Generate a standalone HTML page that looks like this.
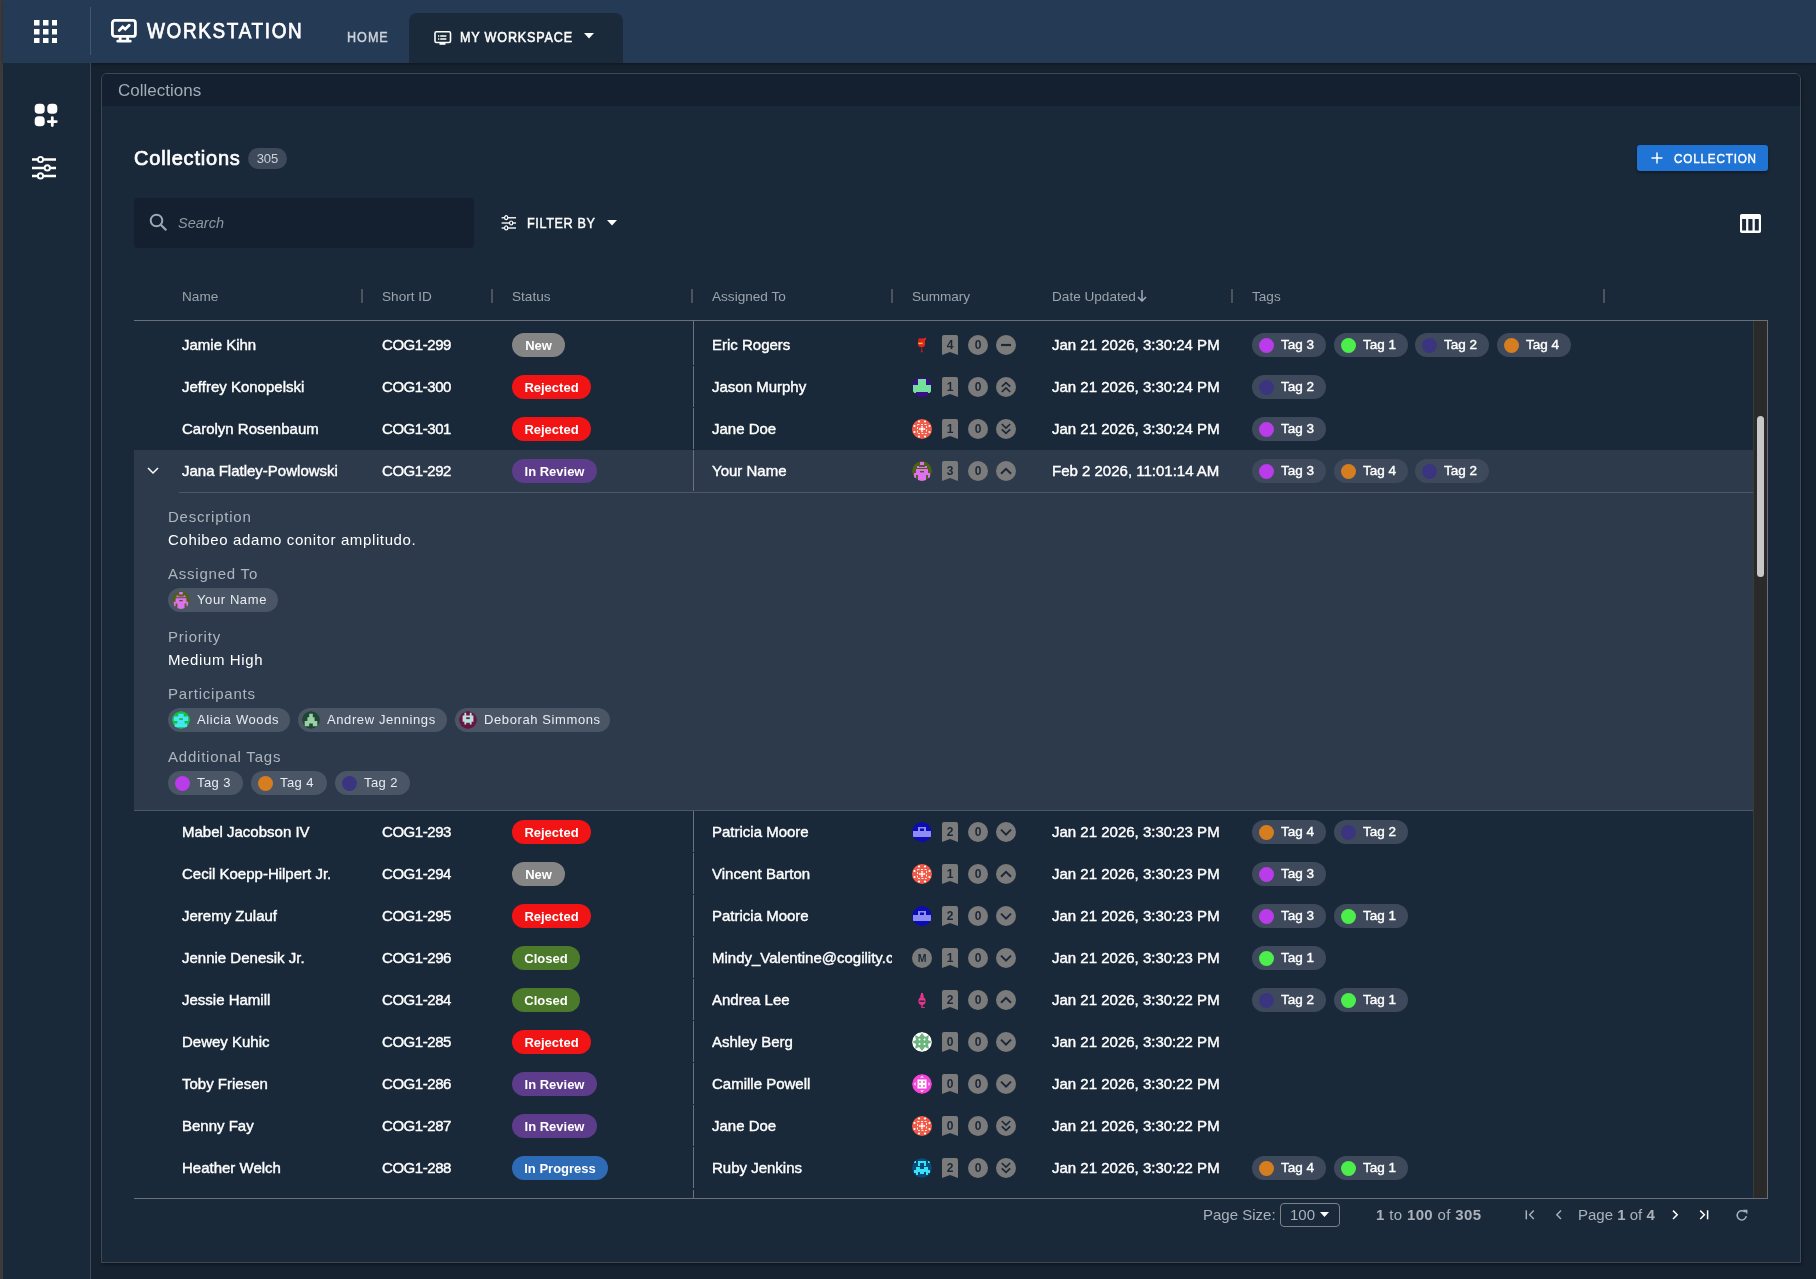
<!DOCTYPE html><html><head><meta charset="utf-8"><style>

*{box-sizing:border-box;margin:0;padding:0}
svg{display:block}
html,body{width:1816px;height:1279px;overflow:hidden;background:#172230;font-family:"Liberation Sans",sans-serif;color:#fff}
.abs{position:absolute}
#root{position:absolute;left:0;top:0;width:1816px;height:1279px;overflow:hidden;background:#172230;will-change:transform}
#strip{position:absolute;left:0;top:0;width:3px;height:1279px;background:#3b3b3b}
#hdr{position:absolute;left:3px;top:0;width:1813px;height:63px;background:#253a55;box-shadow:0 1px 3px rgba(0,0,0,.35)}
#side{position:absolute;left:3px;top:63px;width:88px;height:1216px;background:#1a2939;border-right:1px solid #3b4a5b}
#panel{position:absolute;left:101px;top:73px;width:1700px;height:1190px;background:#1a2939;border:1px solid #3f4955;border-radius:6px 6px 0 0;overflow:hidden;box-shadow:1px 2px 3px rgba(0,0,0,.35)}
#phead{position:absolute;left:0;top:0;width:100%;height:32px;background:#142030}
.row{position:absolute;left:134px;width:1619px;height:42px}
.row .c{position:absolute;top:0;height:42px;line-height:42px;white-space:nowrap;font-size:15px;-webkit-text-stroke:0.4px #fff}
.nm{left:48px} .sid{left:248px;letter-spacing:-0.45px} .stc{left:378px} .asg{left:578px;width:180px;overflow:hidden}
.sum{left:778px} .dt{left:918px} .tg{left:1118px}
.vsep{position:absolute;left:559px;top:0px;width:1px;height:41px;background:#6d737a}
.st{position:absolute;left:0;top:9px;height:24px;line-height:25px;border-radius:12px;text-align:center;font-size:13px;font-weight:bold;-webkit-text-stroke:0}
.sum span, .sum .bm{position:absolute;top:11px}
.av{left:0} .bm{left:30px;width:16px;height:20px} .zero{left:56px;width:20px;height:20px;border-radius:10px;background:#7b7b7b;color:#1b2839;font-size:12px;font-weight:bold;line-height:20px;text-align:center;-webkit-text-stroke:0}
.pr{left:84px}
.bm span{position:absolute;left:0;top:1px;width:16px;text-align:center;line-height:18px;font-size:12px;font-weight:bold;color:#1b2839;-webkit-text-stroke:0}
.bm svg{position:absolute;left:0;top:0}
.tag{position:absolute;top:9px;width:74px;height:24px;line-height:24px;border-radius:12px;background:#3e4a5b;padding:0 0 0 29px;font-size:13.5px}
.tag i{position:absolute;left:6.5px;top:4.5px;width:15px;height:15px;border-radius:8px}
.chev{position:absolute;left:12.5px;top:17px}

</style></head><body><div id="root">
<div id="strip"></div>
<div id="hdr"></div>
<div class="abs" style="left:90px;top:7px;width:1px;height:48px;background:#46586d"></div>
<svg class="abs" style="left:34px;top:20px" width="23" height="23" viewBox="0 0 23 23" fill="#fff"><rect x="0" y="0" width="5.5" height="5.5"/><rect x="9" y="0" width="5.5" height="5.5"/><rect x="18" y="0" width="5.5" height="5.5"/><rect x="0" y="9" width="5.5" height="5.5"/><rect x="9" y="9" width="5.5" height="5.5"/><rect x="18" y="9" width="5.5" height="5.5"/><rect x="0" y="18" width="5.5" height="5.5"/><rect x="9" y="18" width="5.5" height="5.5"/><rect x="18" y="18" width="5.5" height="5.5"/></svg>
<svg class="abs" style="left:111px;top:19px" width="26" height="24" viewBox="0 0 26 24"><rect x="1.4" y="1.4" width="23" height="16" rx="2.5" fill="none" stroke="#fff" stroke-width="2.8"/><rect x="7.8" y="17" width="2.8" height="4.5" fill="#fff"/><rect x="15.2" y="17" width="2.8" height="4.5" fill="#fff"/><rect x="5.4" y="20.7" width="15.2" height="2.7" rx="1.2" fill="#fff"/><path d="M8.2 11.5l3.5-3.5 2.5 2.2 4-4" stroke="#fff" stroke-width="2.8" fill="none" stroke-linecap="round"/></svg>
<div class="abs" style="left:147px;top:17px;font-size:21.5px;line-height:28px;letter-spacing:1.9px;-webkit-text-stroke:0.75px #fff;transform:scaleX(0.88);transform-origin:0 0">WORKSTATION</div>
<div class="abs" style="left:347px;top:29px;font-size:14px;line-height:16px;letter-spacing:1.1px;color:#cdd3da;-webkit-text-stroke:0.45px #cdd3da;transform:scaleX(0.9);transform-origin:0 0">HOME</div>
<div class="abs" style="left:409px;top:13px;width:214px;height:50px;background:#1a2a3a;border-radius:8px 8px 0 0"></div>
<svg class="abs" style="left:434px;top:31px" width="18" height="14" viewBox="0 0 18 14"><rect x="1" y="0.8" width="15.5" height="10.7" rx="1.5" fill="none" stroke="#fff" stroke-width="1.6"/><rect x="5.5" y="11.5" width="6" height="2.3" fill="#fff"/><path d="M4 5h1.3M6.2 5h6.2M4 8h1.3M6.2 8h6.2" stroke="#fff" stroke-width="1.4"/></svg>
<div class="abs" style="left:460px;top:29px;font-size:14px;line-height:16px;letter-spacing:0.9px;-webkit-text-stroke:0.5px #fff;transform:scaleX(0.9);transform-origin:0 0">MY WORKSPACE</div>
<svg class="abs" style="left:584px;top:33px" width="10" height="6" viewBox="0 0 10 6"><path d="M0 0h10L5 5.5z" fill="#fff"/></svg>
<div id="side"></div>
<svg class="abs" style="left:34px;top:103px" width="24" height="24" viewBox="0 0 24 24" fill="#fff"><rect x="0.7" y="0.7" width="10" height="10" rx="3.8"/><rect x="13.3" y="0.7" width="10" height="10" rx="3.8"/><rect x="0.7" y="13.3" width="10" height="10" rx="3.8"/><path d="M18.3 14.6v8M14.3 18.6h8" stroke="#fff" stroke-width="2.8" stroke-linecap="round"/></svg>
<svg class="abs" style="left:31px;top:155px" width="26" height="25" viewBox="0 0 26 25"><path d="M1 4.5h24M1 12.9h24M1 20.9h24" stroke="#fff" stroke-width="2.5"/><circle cx="9.5" cy="4.5" r="2.6" fill="#1a2838" stroke="#fff" stroke-width="1.9"/><circle cx="16.3" cy="12.9" r="2.6" fill="#1a2838" stroke="#fff" stroke-width="1.9"/><circle cx="9.5" cy="20.9" r="2.6" fill="#1a2838" stroke="#fff" stroke-width="1.9"/></svg>
<div id="panel"><div id="phead"></div></div>
<div class="abs" style="left:118px;top:81px;font-size:17px;line-height:20px;color:#a3abb5">Collections</div>
<div class="abs" style="left:134px;top:146px;font-size:20px;line-height:24px;-webkit-text-stroke:0.7px #fff;letter-spacing:0.8px">Collections</div>
<div class="abs" style="left:248px;top:148px;width:39px;height:21px;border-radius:11px;background:#3e4a5b;color:#c9d0d8;font-size:13px;line-height:21px;text-align:center">305</div>
<div class="abs" style="left:134px;top:198px;width:340px;height:50px;border-radius:4px;background:#142030"></div>
<svg class="abs" style="left:149px;top:213px" width="19" height="19" viewBox="0 0 19 19"><circle cx="7.5" cy="7.5" r="5.8" fill="none" stroke="#a0a7b0" stroke-width="2"/><path d="M11.8 11.8l5.5 5.5" stroke="#a0a7b0" stroke-width="2.2"/></svg>
<div class="abs" style="left:178px;top:215px;font-size:14.5px;line-height:17px;font-style:italic;color:#8f97a1">Search</div>
<svg class="abs" style="left:501px;top:215px" width="16" height="16" viewBox="0 0 16 16"><path d="M0.6 2.7h14.4M0.6 8h14.4M0.6 12.9h14.4" stroke="#e6e9ed" stroke-width="1.5"/><ellipse cx="5.2" cy="2.7" rx="1.6" ry="2" fill="#1b2839" stroke="#fff" stroke-width="1.2"/><ellipse cx="10.2" cy="8" rx="1.6" ry="2" fill="#1b2839" stroke="#fff" stroke-width="1.2"/><ellipse cx="5.2" cy="12.9" rx="1.6" ry="2" fill="#1b2839" stroke="#fff" stroke-width="1.2"/></svg>
<div class="abs" style="left:527px;top:215px;font-size:14px;line-height:16px;letter-spacing:0.72px;-webkit-text-stroke:0.45px #fff;transform:scaleX(0.9);transform-origin:0 0">FILTER BY</div>
<svg class="abs" style="left:607px;top:220px" width="10" height="6" viewBox="0 0 10 6"><path d="M0 0h10L5 5.5z" fill="#fff"/></svg>
<div class="abs" style="left:1637px;top:145px;width:131px;height:26px;border-radius:3px;background:#1f74d5;box-shadow:0 2px 3px rgba(0,0,0,.35)"></div>
<svg class="abs" style="left:1651px;top:152px" width="12" height="12" viewBox="0 0 12 12"><path d="M6 0.5v11M0.5 6h11" stroke="#fff" stroke-width="1.5"/></svg>
<div class="abs" style="left:1674px;top:151px;font-size:13px;line-height:15px;letter-spacing:0.9px;-webkit-text-stroke:0.4px #fff;transform:scaleX(0.9);transform-origin:0 0">COLLECTION</div>
<svg class="abs" style="left:1740px;top:214px" width="21" height="19" viewBox="0 0 21 19"><path fill-rule="evenodd" fill="#fff" d="M1.8 0h17.4a1.8 1.8 0 0 1 1.8 1.8v15.4a1.8 1.8 0 0 1-1.8 1.8H1.8A1.8 1.8 0 0 1 0 17.2V1.8A1.8 1.8 0 0 1 1.8 0zM2.1 5v11.6h4V5zM8.3 5v11.6h4.2V5zM14.8 5v11.6h4V5z"/></svg>
<div class="abs" style="left:182px;top:288.5px;font-size:13.6px;line-height:16px;color:#9ba3ad">Name</div>
<div class="abs" style="left:382px;top:288.5px;font-size:13.6px;line-height:16px;color:#9ba3ad">Short ID</div>
<div class="abs" style="left:512px;top:288.5px;font-size:13.6px;line-height:16px;color:#9ba3ad">Status</div>
<div class="abs" style="left:712px;top:288.5px;font-size:13.6px;line-height:16px;color:#9ba3ad">Assigned To</div>
<div class="abs" style="left:912px;top:288.5px;font-size:13.6px;line-height:16px;color:#9ba3ad">Summary</div>
<div class="abs" style="left:1052px;top:288.5px;font-size:13.6px;line-height:16px;color:#9ba3ad">Date Updated</div>
<div class="abs" style="left:1252px;top:288.5px;font-size:13.6px;line-height:16px;color:#9ba3ad">Tags</div>
<svg class="abs" style="left:1137px;top:290px" width="10" height="12" viewBox="0 0 10 12"><path d="M5 0v11M1 7l4 4 4-4" stroke="#a3abb5" stroke-width="1.5" fill="none"/></svg>
<div class="abs" style="left:361px;top:289px;width:2px;height:14px;background:#4c535b"></div>
<div class="abs" style="left:491px;top:289px;width:2px;height:14px;background:#4c535b"></div>
<div class="abs" style="left:691px;top:289px;width:2px;height:14px;background:#4c535b"></div>
<div class="abs" style="left:891px;top:289px;width:2px;height:14px;background:#4c535b"></div>
<div class="abs" style="left:1231px;top:289px;width:2px;height:14px;background:#4c535b"></div>
<div class="abs" style="left:1603px;top:289px;width:2px;height:14px;background:#4c535b"></div>
<div class="abs" style="left:134px;top:320px;width:1634px;height:1px;background:#6a7079"></div>
<div class="abs" style="left:693px;top:321px;width:1px;height:3px;background:#6d737a"></div>
<div class="abs" style="left:693px;top:1190px;width:1px;height:8px;background:#6d737a"></div>
<div class="row" style="top:324px;"><div class="c nm">Jamie Kihn</div><div class="c sid">COG1-299</div><div class="c stc"><span class="st" style="background:#858585;width:53px">New</span></div><div class="vsep"></div><div class="c asg">Eric Rogers</div><div class="c sum"><span class="av"><svg width="20" height="20" viewBox="0 0 20 20"><defs><clipPath id="cc"><circle cx="10" cy="10" r="10"/></clipPath></defs><g clip-path="url(#cc)"><path d="M6.5 3.5h5l2.5-1v2l-1 1v5l-1.5 1.5h-4L6 10z" fill="#e52222"/><rect x="6.3" y="7.6" width="4.2" height="1.5" fill="#f2c21a"/><rect x="7.3" y="5.5" width="1.2" height="1.2" fill="#901010"/><rect x="9.3" y="12" width="1" height="4.5" fill="#b02020"/><circle cx="9.8" cy="16.6" r="1" fill="#c02020"/></g></svg></span><div class="bm"><svg width="16" height="20" viewBox="0 0 16 20"><path d="M2 0h12a2 2 0 0 1 2 2v18l-8-3-8 3V2a2 2 0 0 1 2-2z" fill="#7b7b7b"/></svg><span>4</span></div><span class="zero">0</span><span class="pr"><svg width="20" height="20" viewBox="0 0 20 20"><circle cx="10" cy="10" r="10" fill="#7b7b7b"/><path d="M5 10h10" stroke="#1b2839" stroke-width="2.2"/></svg></span></div><div class="c dt">Jan 21 2026, 3:30:24 PM</div><div class="c tg"><div class="tag" style="left:0px"><i style="background:#b93be9"></i>Tag 3</div><div class="tag" style="left:82px"><i style="background:#4cee4c"></i>Tag 1</div><div class="tag" style="left:163px"><i style="background:#3b3580"></i>Tag 2</div><div class="tag" style="left:245px"><i style="background:#d67d1f"></i>Tag 4</div></div></div>
<div class="row" style="top:366px;"><div class="c nm">Jeffrey Konopelski</div><div class="c sid">COG1-300</div><div class="c stc"><span class="st" style="background:#f21414;width:79px">Rejected</span></div><div class="vsep"></div><div class="c asg">Jason Murphy</div><div class="c sum"><span class="av"><svg width="20" height="20" viewBox="0 0 20 20"><defs><clipPath id="cc"><circle cx="10" cy="10" r="10"/></clipPath></defs><g clip-path="url(#cc)"><circle cx="10" cy="10" r="10" fill="#3a0e88"/><path d="M6 2h8v6h5v8H1V8h5z" fill="#74e09c"/><rect x="4" y="15" width="12" height="6" fill="#3a0e88"/></g></svg></span><div class="bm"><svg width="16" height="20" viewBox="0 0 16 20"><path d="M2 0h12a2 2 0 0 1 2 2v18l-8-3-8 3V2a2 2 0 0 1 2-2z" fill="#7b7b7b"/></svg><span>1</span></div><span class="zero">0</span><span class="pr"><svg width="20" height="20" viewBox="0 0 20 20"><circle cx="10" cy="10" r="10" fill="#7b7b7b"/><path d="M5.8 9.6l4.2-4 4.2 4M5.8 15l4.2-4 4.2 4" stroke="#1b2839" stroke-width="1.7" fill="none"/></svg></span></div><div class="c dt">Jan 21 2026, 3:30:24 PM</div><div class="c tg"><div class="tag" style="left:0px"><i style="background:#3b3580"></i>Tag 2</div></div></div>
<div class="row" style="top:408px;"><div class="c nm">Carolyn Rosenbaum</div><div class="c sid">COG1-301</div><div class="c stc"><span class="st" style="background:#f21414;width:79px">Rejected</span></div><div class="vsep"></div><div class="c asg">Jane Doe</div><div class="c sum"><span class="av"><svg width="20" height="20" viewBox="0 0 20 20"><circle cx="10" cy="10" r="10" fill="#f25a48"/><circle cx="7" cy="2.5" r="1.1" fill="#ffffff"/><circle cx="13" cy="2.5" r="1.1" fill="#ffffff"/><circle cx="2.5" cy="7" r="1.1" fill="#ffffff"/><circle cx="17.5" cy="7" r="1.1" fill="#ffffff"/><circle cx="2.5" cy="13" r="1.1" fill="#ffffff"/><circle cx="17.5" cy="13" r="1.1" fill="#ffffff"/><circle cx="7" cy="17.5" r="1.1" fill="#ffffff"/><circle cx="13" cy="17.5" r="1.1" fill="#ffffff"/><path d="M5.5 5.5h9v9h-9z" fill="none" stroke="#ffffff" stroke-width="0.9" stroke-dasharray="2 1.5"/><circle cx="10" cy="10" r="1.8" fill="#ffffff"/><path d="M10 6.5l1.2 1.5h-2.4zM10 13.5l1.2-1.5h-2.4zM6.5 10l1.5 1.2v-2.4zM13.5 10l-1.5 1.2v-2.4z" fill="#ffffff"/></svg></span><div class="bm"><svg width="16" height="20" viewBox="0 0 16 20"><path d="M2 0h12a2 2 0 0 1 2 2v18l-8-3-8 3V2a2 2 0 0 1 2-2z" fill="#7b7b7b"/></svg><span>1</span></div><span class="zero">0</span><span class="pr"><svg width="20" height="20" viewBox="0 0 20 20"><circle cx="10" cy="10" r="10" fill="#7b7b7b"/><path d="M5.8 5l4.2 4 4.2-4M5.8 10.4l4.2 4 4.2-4" stroke="#1b2839" stroke-width="1.7" fill="none"/></svg></span></div><div class="c dt">Jan 21 2026, 3:30:24 PM</div><div class="c tg"><div class="tag" style="left:0px"><i style="background:#b93be9"></i>Tag 3</div></div></div>
<div class="row" style="top:450px;background:#2c3a4c;"><svg class="chev" width="12" height="8" viewBox="0 0 12 8"><path d="M1 1l5 5 5-5" stroke="#fff" stroke-width="1.5" fill="none"/></svg><div class="c nm">Jana Flatley-Powlowski</div><div class="c sid">COG1-292</div><div class="c stc"><span class="st" style="background:#5d3c8b;width:85px">In Review</span></div><div class="vsep"></div><div class="c asg">Your Name</div><div class="c sum"><span class="av"><svg width="20" height="20" viewBox="0 0 20 20"><defs><clipPath id="cc"><circle cx="10" cy="10" r="10"/></clipPath></defs><g clip-path="url(#cc)"><circle cx="10" cy="10" r="10" fill="#4e6018"/><path d="M8 1h4v3h-4zM5 5h2v1h6V5h2v2H5zM4 8h12v4h2v5h-2v-3h-2v6H6v-6H4v3H2v-5h2z" fill="#e070f2"/><rect x="8" y="10" width="4" height="1.4" fill="#4e6018"/></g></svg></span><div class="bm"><svg width="16" height="20" viewBox="0 0 16 20"><path d="M2 0h12a2 2 0 0 1 2 2v18l-8-3-8 3V2a2 2 0 0 1 2-2z" fill="#7b7b7b"/></svg><span>3</span></div><span class="zero">0</span><span class="pr"><svg width="20" height="20" viewBox="0 0 20 20"><circle cx="10" cy="10" r="10" fill="#7b7b7b"/><path d="M5 12.8l5-5 5 5" stroke="#1b2839" stroke-width="2" fill="none"/></svg></span></div><div class="c dt">Feb 2 2026, 11:01:14 AM</div><div class="c tg"><div class="tag" style="left:0px"><i style="background:#b93be9"></i>Tag 3</div><div class="tag" style="left:82px"><i style="background:#d67d1f"></i>Tag 4</div><div class="tag" style="left:163px"><i style="background:#3b3580"></i>Tag 2</div></div></div>
<div class="row" style="top:811px;"><div class="c nm">Mabel Jacobson IV</div><div class="c sid">COG1-293</div><div class="c stc"><span class="st" style="background:#f21414;width:79px">Rejected</span></div><div class="vsep"></div><div class="c asg">Patricia Moore</div><div class="c sum"><span class="av"><svg width="20" height="20" viewBox="0 0 20 20"><defs><clipPath id="cc"><circle cx="10" cy="10" r="10"/></clipPath></defs><g clip-path="url(#cc)"><circle cx="10" cy="10" r="10" fill="#0c0cb4"/><path d="M6 5h8v4h5v6H1V9h5z" fill="#8c8cf4"/><rect x="8" y="6.5" width="4" height="2.5" fill="#0c0cb4"/><rect x="1" y="15" width="18" height="5" fill="#0c0cb4"/></g></svg></span><div class="bm"><svg width="16" height="20" viewBox="0 0 16 20"><path d="M2 0h12a2 2 0 0 1 2 2v18l-8-3-8 3V2a2 2 0 0 1 2-2z" fill="#7b7b7b"/></svg><span>2</span></div><span class="zero">0</span><span class="pr"><svg width="20" height="20" viewBox="0 0 20 20"><circle cx="10" cy="10" r="10" fill="#7b7b7b"/><path d="M5 7.6l5 5 5-5" stroke="#1b2839" stroke-width="2" fill="none"/></svg></span></div><div class="c dt">Jan 21 2026, 3:30:23 PM</div><div class="c tg"><div class="tag" style="left:0px"><i style="background:#d67d1f"></i>Tag 4</div><div class="tag" style="left:82px"><i style="background:#3b3580"></i>Tag 2</div></div></div>
<div class="row" style="top:853px;"><div class="c nm">Cecil Koepp-Hilpert Jr.</div><div class="c sid">COG1-294</div><div class="c stc"><span class="st" style="background:#858585;width:53px">New</span></div><div class="vsep"></div><div class="c asg">Vincent Barton</div><div class="c sum"><span class="av"><svg width="20" height="20" viewBox="0 0 20 20"><circle cx="10" cy="10" r="10" fill="#f25a48"/><circle cx="7" cy="2.5" r="1.1" fill="#ffffff"/><circle cx="13" cy="2.5" r="1.1" fill="#ffffff"/><circle cx="2.5" cy="7" r="1.1" fill="#ffffff"/><circle cx="17.5" cy="7" r="1.1" fill="#ffffff"/><circle cx="2.5" cy="13" r="1.1" fill="#ffffff"/><circle cx="17.5" cy="13" r="1.1" fill="#ffffff"/><circle cx="7" cy="17.5" r="1.1" fill="#ffffff"/><circle cx="13" cy="17.5" r="1.1" fill="#ffffff"/><path d="M5.5 5.5h9v9h-9z" fill="none" stroke="#ffffff" stroke-width="0.9" stroke-dasharray="2 1.5"/><circle cx="10" cy="10" r="1.8" fill="#ffffff"/><path d="M10 6.5l1.2 1.5h-2.4zM10 13.5l1.2-1.5h-2.4zM6.5 10l1.5 1.2v-2.4zM13.5 10l-1.5 1.2v-2.4z" fill="#ffffff"/></svg></span><div class="bm"><svg width="16" height="20" viewBox="0 0 16 20"><path d="M2 0h12a2 2 0 0 1 2 2v18l-8-3-8 3V2a2 2 0 0 1 2-2z" fill="#7b7b7b"/></svg><span>1</span></div><span class="zero">0</span><span class="pr"><svg width="20" height="20" viewBox="0 0 20 20"><circle cx="10" cy="10" r="10" fill="#7b7b7b"/><path d="M5 12.8l5-5 5 5" stroke="#1b2839" stroke-width="2" fill="none"/></svg></span></div><div class="c dt">Jan 21 2026, 3:30:23 PM</div><div class="c tg"><div class="tag" style="left:0px"><i style="background:#b93be9"></i>Tag 3</div></div></div>
<div class="row" style="top:895px;"><div class="c nm">Jeremy Zulauf</div><div class="c sid">COG1-295</div><div class="c stc"><span class="st" style="background:#f21414;width:79px">Rejected</span></div><div class="vsep"></div><div class="c asg">Patricia Moore</div><div class="c sum"><span class="av"><svg width="20" height="20" viewBox="0 0 20 20"><defs><clipPath id="cc"><circle cx="10" cy="10" r="10"/></clipPath></defs><g clip-path="url(#cc)"><circle cx="10" cy="10" r="10" fill="#0c0cb4"/><path d="M6 5h8v4h5v6H1V9h5z" fill="#8c8cf4"/><rect x="8" y="6.5" width="4" height="2.5" fill="#0c0cb4"/><rect x="1" y="15" width="18" height="5" fill="#0c0cb4"/></g></svg></span><div class="bm"><svg width="16" height="20" viewBox="0 0 16 20"><path d="M2 0h12a2 2 0 0 1 2 2v18l-8-3-8 3V2a2 2 0 0 1 2-2z" fill="#7b7b7b"/></svg><span>2</span></div><span class="zero">0</span><span class="pr"><svg width="20" height="20" viewBox="0 0 20 20"><circle cx="10" cy="10" r="10" fill="#7b7b7b"/><path d="M5 7.6l5 5 5-5" stroke="#1b2839" stroke-width="2" fill="none"/></svg></span></div><div class="c dt">Jan 21 2026, 3:30:23 PM</div><div class="c tg"><div class="tag" style="left:0px"><i style="background:#b93be9"></i>Tag 3</div><div class="tag" style="left:82px"><i style="background:#4cee4c"></i>Tag 1</div></div></div>
<div class="row" style="top:937px;"><div class="c nm">Jennie Denesik Jr.</div><div class="c sid">COG1-296</div><div class="c stc"><span class="st" style="background:#4b7a2b;width:68px">Closed</span></div><div class="vsep"></div><div class="c asg">Mindy_Valentine@cogility.c</div><div class="c sum"><span class="av"><svg width="20" height="20" viewBox="0 0 20 20"><circle cx="10" cy="10" r="10" fill="#7b7b7b"/><text x="10" y="14" text-anchor="middle" font-family="Liberation Sans" font-weight="bold" font-size="10.5" fill="#1b2839">M</text></svg></span><div class="bm"><svg width="16" height="20" viewBox="0 0 16 20"><path d="M2 0h12a2 2 0 0 1 2 2v18l-8-3-8 3V2a2 2 0 0 1 2-2z" fill="#7b7b7b"/></svg><span>1</span></div><span class="zero">0</span><span class="pr"><svg width="20" height="20" viewBox="0 0 20 20"><circle cx="10" cy="10" r="10" fill="#7b7b7b"/><path d="M5 7.6l5 5 5-5" stroke="#1b2839" stroke-width="2" fill="none"/></svg></span></div><div class="c dt">Jan 21 2026, 3:30:23 PM</div><div class="c tg"><div class="tag" style="left:0px"><i style="background:#4cee4c"></i>Tag 1</div></div></div>
<div class="row" style="top:979px;"><div class="c nm">Jessie Hamill</div><div class="c sid">COG1-284</div><div class="c stc"><span class="st" style="background:#4b7a2b;width:68px">Closed</span></div><div class="vsep"></div><div class="c asg">Andrea Lee</div><div class="c sum"><span class="av"><svg width="20" height="20" viewBox="0 0 20 20"><defs><clipPath id="cc"><circle cx="10" cy="10" r="10"/></clipPath></defs><g clip-path="url(#cc)"><ellipse cx="10" cy="11" rx="3.6" ry="4" fill="#e8348c"/><circle cx="10" cy="6" r="1.8" fill="#e8348c"/><rect x="9" y="3" width="2" height="2" fill="#e8348c"/><rect x="7.5" y="10.5" width="5" height="1.3" fill="#1b2839"/><rect x="9.3" y="15" width="1.4" height="3" fill="#e8348c"/><rect x="10.7" y="17" width="2" height="1" fill="#e8348c"/></g></svg></span><div class="bm"><svg width="16" height="20" viewBox="0 0 16 20"><path d="M2 0h12a2 2 0 0 1 2 2v18l-8-3-8 3V2a2 2 0 0 1 2-2z" fill="#7b7b7b"/></svg><span>2</span></div><span class="zero">0</span><span class="pr"><svg width="20" height="20" viewBox="0 0 20 20"><circle cx="10" cy="10" r="10" fill="#7b7b7b"/><path d="M5 12.8l5-5 5 5" stroke="#1b2839" stroke-width="2" fill="none"/></svg></span></div><div class="c dt">Jan 21 2026, 3:30:22 PM</div><div class="c tg"><div class="tag" style="left:0px"><i style="background:#3b3580"></i>Tag 2</div><div class="tag" style="left:82px"><i style="background:#4cee4c"></i>Tag 1</div></div></div>
<div class="row" style="top:1021px;"><div class="c nm">Dewey Kuhic</div><div class="c sid">COG1-285</div><div class="c stc"><span class="st" style="background:#f21414;width:79px">Rejected</span></div><div class="vsep"></div><div class="c asg">Ashley Berg</div><div class="c sum"><span class="av"><svg width="20" height="20" viewBox="0 0 20 20"><defs><clipPath id="cc"><circle cx="10" cy="10" r="10"/></clipPath></defs><g clip-path="url(#cc)"><circle cx="10" cy="10" r="10" fill="#ffffff"/><path d="M10 1l3 4 4-2-1 5 4 2-4 2 1 5-4-2-3 4-3-4-4 2 1-5-4-2 4-2-1-5 4 2z" fill="#6cb57e"/><circle cx="7.5" cy="7.5" r="1" fill="#fff"/><circle cx="12.5" cy="7.5" r="1" fill="#fff"/><circle cx="7.5" cy="12" r="1" fill="#fff"/><circle cx="12.5" cy="12" r="1" fill="#fff"/></g></svg></span><div class="bm"><svg width="16" height="20" viewBox="0 0 16 20"><path d="M2 0h12a2 2 0 0 1 2 2v18l-8-3-8 3V2a2 2 0 0 1 2-2z" fill="#7b7b7b"/></svg><span>0</span></div><span class="zero">0</span><span class="pr"><svg width="20" height="20" viewBox="0 0 20 20"><circle cx="10" cy="10" r="10" fill="#7b7b7b"/><path d="M5 7.6l5 5 5-5" stroke="#1b2839" stroke-width="2" fill="none"/></svg></span></div><div class="c dt">Jan 21 2026, 3:30:22 PM</div><div class="c tg"></div></div>
<div class="row" style="top:1063px;"><div class="c nm">Toby Friesen</div><div class="c sid">COG1-286</div><div class="c stc"><span class="st" style="background:#5d3c8b;width:85px">In Review</span></div><div class="vsep"></div><div class="c asg">Camille Powell</div><div class="c sum"><span class="av"><svg width="20" height="20" viewBox="0 0 20 20"><defs><clipPath id="cc"><circle cx="10" cy="10" r="10"/></clipPath></defs><g clip-path="url(#cc)"><circle cx="10" cy="10" r="10" fill="#f244d8"/><rect x="5.5" y="5.5" width="9" height="9" fill="#ffffff"/><circle cx="8" cy="8" r="0.9" fill="#f244d8"/><circle cx="12" cy="8" r="0.9" fill="#f244d8"/><circle cx="8" cy="12" r="0.9" fill="#f244d8"/><circle cx="12" cy="12" r="0.9" fill="#f244d8"/><path d="M2 10l1.5-2v4zM18 10l-1.5-2v4zM10 2l-2 1.5h4zM10 18l-2-1.5h4z" fill="#fff"/></g></svg></span><div class="bm"><svg width="16" height="20" viewBox="0 0 16 20"><path d="M2 0h12a2 2 0 0 1 2 2v18l-8-3-8 3V2a2 2 0 0 1 2-2z" fill="#7b7b7b"/></svg><span>0</span></div><span class="zero">0</span><span class="pr"><svg width="20" height="20" viewBox="0 0 20 20"><circle cx="10" cy="10" r="10" fill="#7b7b7b"/><path d="M5 7.6l5 5 5-5" stroke="#1b2839" stroke-width="2" fill="none"/></svg></span></div><div class="c dt">Jan 21 2026, 3:30:22 PM</div><div class="c tg"></div></div>
<div class="row" style="top:1105px;"><div class="c nm">Benny Fay</div><div class="c sid">COG1-287</div><div class="c stc"><span class="st" style="background:#5d3c8b;width:85px">In Review</span></div><div class="vsep"></div><div class="c asg">Jane Doe</div><div class="c sum"><span class="av"><svg width="20" height="20" viewBox="0 0 20 20"><circle cx="10" cy="10" r="10" fill="#f25a48"/><circle cx="7" cy="2.5" r="1.1" fill="#ffffff"/><circle cx="13" cy="2.5" r="1.1" fill="#ffffff"/><circle cx="2.5" cy="7" r="1.1" fill="#ffffff"/><circle cx="17.5" cy="7" r="1.1" fill="#ffffff"/><circle cx="2.5" cy="13" r="1.1" fill="#ffffff"/><circle cx="17.5" cy="13" r="1.1" fill="#ffffff"/><circle cx="7" cy="17.5" r="1.1" fill="#ffffff"/><circle cx="13" cy="17.5" r="1.1" fill="#ffffff"/><path d="M5.5 5.5h9v9h-9z" fill="none" stroke="#ffffff" stroke-width="0.9" stroke-dasharray="2 1.5"/><circle cx="10" cy="10" r="1.8" fill="#ffffff"/><path d="M10 6.5l1.2 1.5h-2.4zM10 13.5l1.2-1.5h-2.4zM6.5 10l1.5 1.2v-2.4zM13.5 10l-1.5 1.2v-2.4z" fill="#ffffff"/></svg></span><div class="bm"><svg width="16" height="20" viewBox="0 0 16 20"><path d="M2 0h12a2 2 0 0 1 2 2v18l-8-3-8 3V2a2 2 0 0 1 2-2z" fill="#7b7b7b"/></svg><span>0</span></div><span class="zero">0</span><span class="pr"><svg width="20" height="20" viewBox="0 0 20 20"><circle cx="10" cy="10" r="10" fill="#7b7b7b"/><path d="M5.8 5l4.2 4 4.2-4M5.8 10.4l4.2 4 4.2-4" stroke="#1b2839" stroke-width="1.7" fill="none"/></svg></span></div><div class="c dt">Jan 21 2026, 3:30:22 PM</div><div class="c tg"></div></div>
<div class="row" style="top:1147px;"><div class="c nm">Heather Welch</div><div class="c sid">COG1-288</div><div class="c stc"><span class="st" style="background:#2e6bb6;width:96px">In Progress</span></div><div class="vsep"></div><div class="c asg">Ruby Jenkins</div><div class="c sum"><span class="av"><svg width="20" height="20" viewBox="0 0 20 20"><defs><clipPath id="cc"><circle cx="10" cy="10" r="10"/></clipPath></defs><g clip-path="url(#cc)"><circle cx="10" cy="10" r="10" fill="#0a4a78"/><path d="M6 3h8v5h-2V5H8v3H6z" fill="#36e2f8"/><path d="M4 9h4v2h4V9h4v3h2v3h-2v2h-2v-3h-2v2H8v-2H6v3H4v-2H2v-3h2z" fill="#36e2f8"/><rect x="2" y="3" width="2" height="2" fill="#36e2f8"/><rect x="16" y="3" width="2" height="2" fill="#36e2f8"/></g></svg></span><div class="bm"><svg width="16" height="20" viewBox="0 0 16 20"><path d="M2 0h12a2 2 0 0 1 2 2v18l-8-3-8 3V2a2 2 0 0 1 2-2z" fill="#7b7b7b"/></svg><span>2</span></div><span class="zero">0</span><span class="pr"><svg width="20" height="20" viewBox="0 0 20 20"><circle cx="10" cy="10" r="10" fill="#7b7b7b"/><path d="M5.8 5l4.2 4 4.2-4M5.8 10.4l4.2 4 4.2-4" stroke="#1b2839" stroke-width="1.7" fill="none"/></svg></span></div><div class="c dt">Jan 21 2026, 3:30:22 PM</div><div class="c tg"><div class="tag" style="left:0px"><i style="background:#d67d1f"></i>Tag 4</div><div class="tag" style="left:82px"><i style="background:#4cee4c"></i>Tag 1</div></div></div>
<div class="abs" style="left:134px;top:492px;width:1619px;height:319px;background:#2c3a4c;border-bottom:1px solid #4a5766"></div>
<div class="abs" style="left:179px;top:492px;width:1574px;height:1px;background:#4a5766"></div>
<div class="abs" style="left:168px;top:508px;font-size:15px;line-height:18px;color:#aeb5be;letter-spacing:0.78px">Description</div>
<div class="abs" style="left:168px;top:531px;font-size:15px;line-height:18px;color:#fff;letter-spacing:0.62px">Cohibeo adamo conitor amplitudo.</div>
<div class="abs" style="left:168px;top:565px;font-size:15px;line-height:18px;color:#aeb5be;letter-spacing:0.78px">Assigned To</div>
<div class="abs" style="left:168px;top:588px;width:110px;height:24px;border-radius:12px;background:#4a5666"><span class="abs" style="left:4px;top:3px"><svg width="18" height="18" viewBox="0 0 20 20"><defs><clipPath id="cc"><circle cx="10" cy="10" r="10"/></clipPath></defs><g clip-path="url(#cc)"><circle cx="10" cy="10" r="10" fill="#4e6018"/><path d="M8 1h4v3h-4zM5 5h2v1h6V5h2v2H5zM4 8h12v4h2v5h-2v-3h-2v6H6v-6H4v3H2v-5h2z" fill="#e070f2"/><rect x="8" y="10" width="4" height="1.4" fill="#4e6018"/></g></svg></span><span class="abs" style="left:29px;top:0;line-height:24px;font-size:13px;letter-spacing:0.6px;color:#e8ecf0">Your Name</span></div>
<div class="abs" style="left:168px;top:628px;font-size:15px;line-height:18px;color:#aeb5be;letter-spacing:0.78px">Priority</div>
<div class="abs" style="left:168px;top:651px;font-size:15px;line-height:18px;color:#fff;letter-spacing:0.62px">Medium High</div>
<div class="abs" style="left:168px;top:685px;font-size:15px;line-height:18px;color:#aeb5be;letter-spacing:0.78px">Participants</div>
<div class="abs" style="left:168px;top:708px;width:122px;height:24px;border-radius:12px;background:#4a5666"><span class="abs" style="left:4px;top:3px"><svg width="18" height="18" viewBox="0 0 20 20"><defs><clipPath id="cc"><circle cx="10" cy="10" r="10"/></clipPath></defs><g clip-path="url(#cc)"><circle cx="10" cy="10" r="10" fill="#12c040"/><path d="M7 3h6v3h5v5h-4v3h3v4H3v-4h3v-3H2V6h5z" fill="#46e4f4"/><rect x="8" y="8" width="4" height="2" fill="#12c040"/></g></svg></span><span class="abs" style="left:29px;top:0;line-height:24px;font-size:13px;letter-spacing:0.6px;color:#e8ecf0">Alicia Woods</span></div>
<div class="abs" style="left:298px;top:708px;width:149px;height:24px;border-radius:12px;background:#4a5666"><span class="abs" style="left:4px;top:3px"><svg width="18" height="18" viewBox="0 0 20 20"><defs><clipPath id="cc"><circle cx="10" cy="10" r="10"/></clipPath></defs><g clip-path="url(#cc)"><circle cx="10" cy="10" r="10" fill="#1d4636"/><path d="M8 3h4v4h2v4h3v6h-5v-3H8v3H3v-6h3V7h2z" fill="#9ccfa6"/></g></svg></span><span class="abs" style="left:29px;top:0;line-height:24px;font-size:13px;letter-spacing:0.6px;color:#e8ecf0">Andrew Jennings</span></div>
<div class="abs" style="left:455px;top:708px;width:155px;height:24px;border-radius:12px;background:#4a5666"><span class="abs" style="left:4px;top:3px"><svg width="18" height="18" viewBox="0 0 20 20"><defs><clipPath id="cc"><circle cx="10" cy="10" r="10"/></clipPath></defs><g clip-path="url(#cc)"><circle cx="10" cy="10" r="10" fill="#6a1444"/><path d="M6 2h2v3h4V2h2v3h2v7h-2v3h-2v-2H8v2H6v-3H4V5h2z" fill="#b8e2da"/><rect x="8" y="7" width="4" height="2" fill="#6a1444"/></g></svg></span><span class="abs" style="left:29px;top:0;line-height:24px;font-size:13px;letter-spacing:0.6px;color:#e8ecf0">Deborah Simmons</span></div>
<div class="abs" style="left:168px;top:748px;font-size:15px;line-height:18px;color:#aeb5be;letter-spacing:0.78px">Additional Tags</div>
<div class="abs" style="left:168px;top:771px;width:75px;height:24px;border-radius:12px;background:#4a5666"><i class="abs" style="left:6.5px;top:4.5px;width:15px;height:15px;border-radius:8px;background:#b93be9"></i><span class="abs" style="left:29px;top:0;line-height:24px;font-size:13px;letter-spacing:0.4px;color:#e8ecf0">Tag 3</span></div>
<div class="abs" style="left:251px;top:771px;width:76px;height:24px;border-radius:12px;background:#4a5666"><i class="abs" style="left:6.5px;top:4.5px;width:15px;height:15px;border-radius:8px;background:#d67d1f"></i><span class="abs" style="left:29px;top:0;line-height:24px;font-size:13px;letter-spacing:0.4px;color:#e8ecf0">Tag 4</span></div>
<div class="abs" style="left:335px;top:771px;width:75px;height:24px;border-radius:12px;background:#4a5666"><i class="abs" style="left:6.5px;top:4.5px;width:15px;height:15px;border-radius:8px;background:#3b3580"></i><span class="abs" style="left:29px;top:0;line-height:24px;font-size:13px;letter-spacing:0.4px;color:#e8ecf0">Tag 2</span></div>
<div class="abs" style="left:1753px;top:321px;width:15px;height:877px;background:#2a2a2a;border-left:1px solid #3a3a3a"></div>
<div class="abs" style="left:1757px;top:416px;width:7px;height:161px;border-radius:4px;background:#c8c8c8"></div>
<div class="abs" style="left:1767px;top:320px;width:1px;height:879px;background:#6a7079"></div>
<div class="abs" style="left:134px;top:1198px;width:1634px;height:1px;background:#6a7079"></div>
<div class="abs" style="left:1203px;top:1206px;font-size:15px;line-height:18px;color:#aab1ba">Page Size:</div>
<div class="abs" style="left:1280px;top:1203px;width:60px;height:24px;border:1px solid #7d8289;border-radius:4px"></div>
<div class="abs" style="left:1290px;top:1206px;font-size:15px;line-height:18px;color:#aab1ba">100</div>
<svg class="abs" style="left:1320px;top:1212px" width="9" height="5" viewBox="0 0 9 5"><path d="M0 0h9L4.5 5z" fill="#ffffff"/></svg>
<div class="abs" style="left:1376px;top:1206px;font-size:15px;line-height:18px;color:#aab1ba;letter-spacing:0.35px"><b>1</b> to <b>100</b> of <b>305</b></div>
<div class="abs" style="left:1578px;top:1206px;font-size:15px;line-height:18px;color:#aab1ba">Page <b>1</b> of <b>4</b></div>
<svg class="abs" style="left:1524px;top:1209px" width="12" height="12" viewBox="0 0 12 12"><path d="M2.3 1.3v9" stroke="#aab1ba" stroke-width="1.5" fill="none"/><path d="M9.8 1.6L5.6 5.8l4.2 4.2" stroke="#aab1ba" stroke-width="1.4" fill="none"/></svg>
<svg class="abs" style="left:1553px;top:1209px" width="10" height="12" viewBox="0 0 10 12"><path d="M8 1.6L3.8 5.8 8 10" stroke="#aab1ba" stroke-width="1.4" fill="none"/></svg>
<svg class="abs" style="left:1670px;top:1209px" width="10" height="12" viewBox="0 0 10 12"><path d="M3 1.6l4.2 4.2L3 10" stroke="#fff" stroke-width="1.5" fill="none"/></svg>
<svg class="abs" style="left:1698px;top:1209px" width="12" height="12" viewBox="0 0 12 12"><path d="M2.2 1.6l4.2 4.2-4.2 4.2" stroke="#fff" stroke-width="1.5" fill="none"/><path d="M9.6 1.3v9" stroke="#fff" stroke-width="1.5" fill="none"/></svg>
<svg class="abs" style="left:1735px;top:1208px" width="14" height="14" viewBox="0 0 14 14"><path d="M11.3 8.2A4.6 4.6 0 1 1 9.9 4" stroke="#aab1ba" stroke-width="1.5" fill="none"/><path d="M8 1.8h4.4v4.4z" fill="#aab1ba"/></svg>
</div></body></html>
